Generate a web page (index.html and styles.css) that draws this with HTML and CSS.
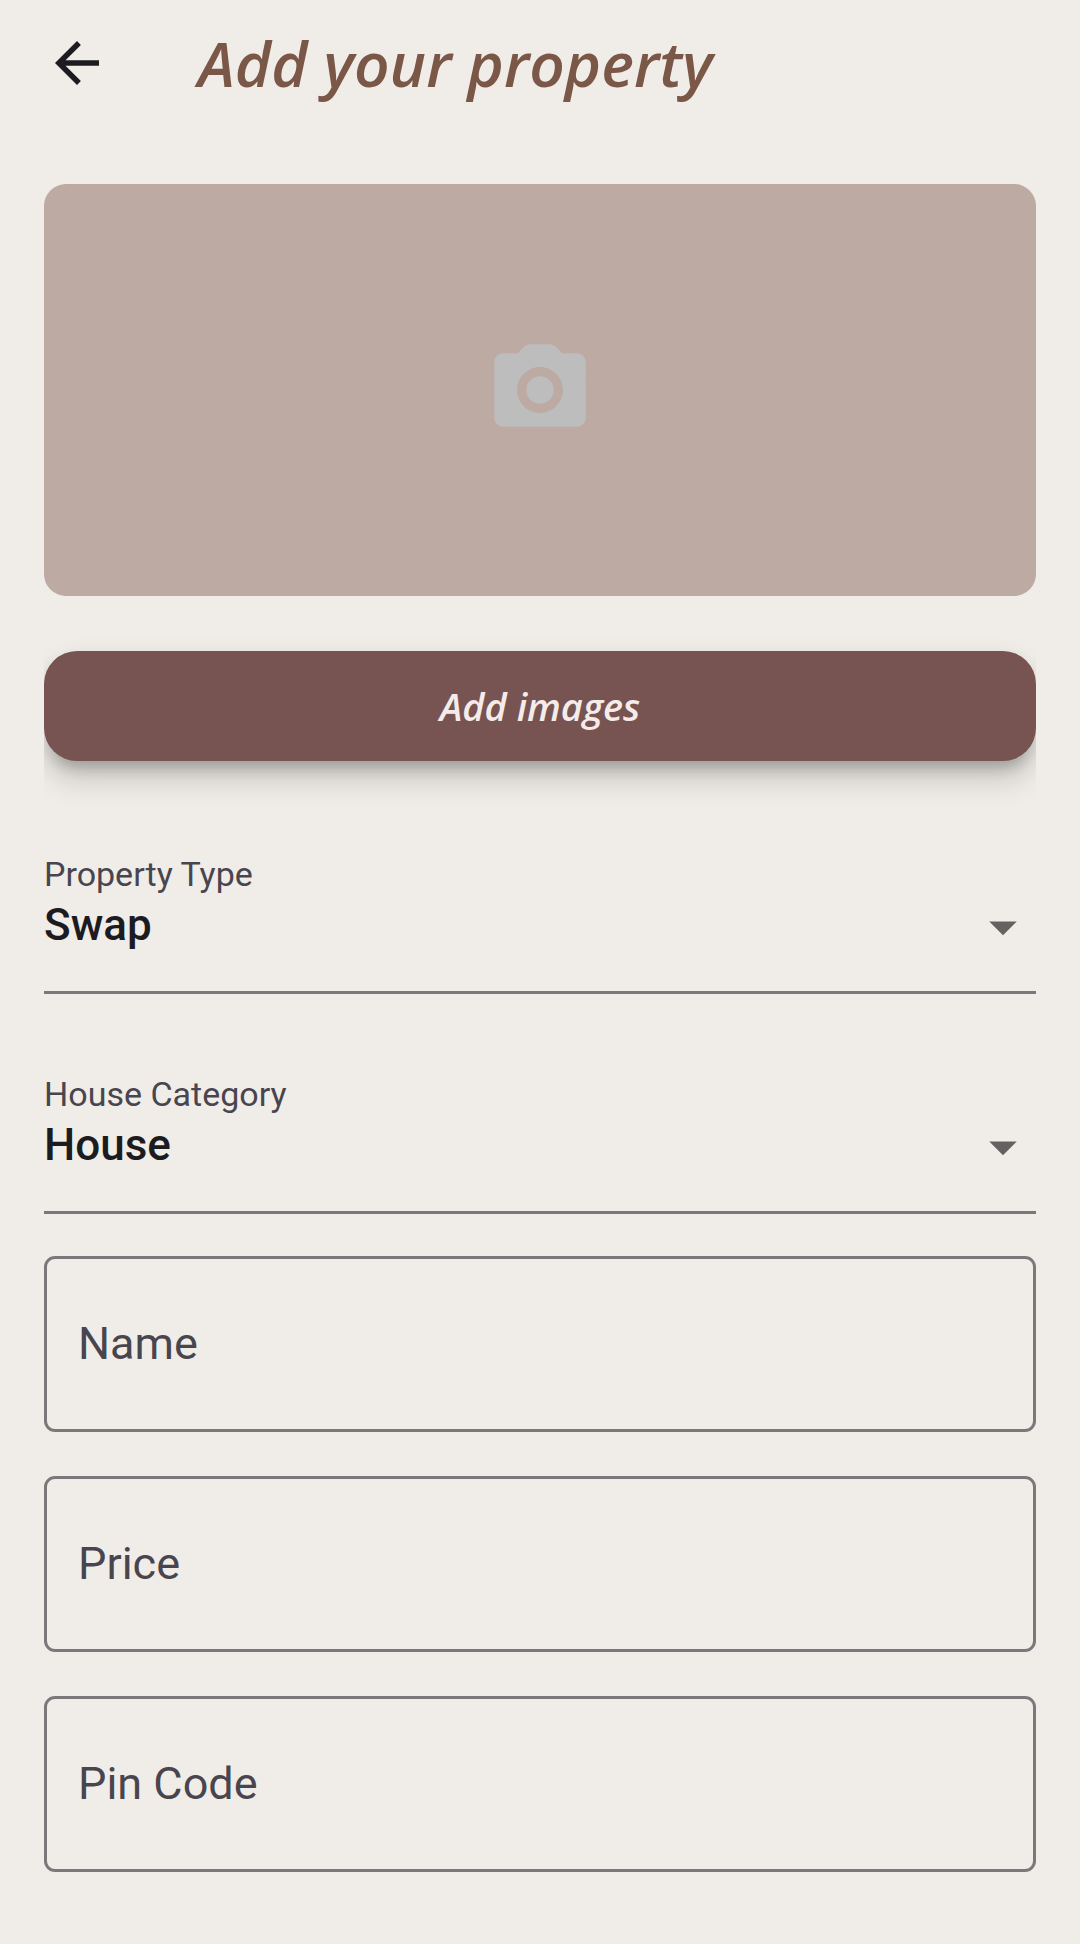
FILE: index.html
```html
<!DOCTYPE html>
<html lang="en">
<head>
  <meta charset="utf-8">
  <meta name="viewport" content="width=device-width, initial-scale=1">
  <title>Add your property</title>
  <link rel="stylesheet" href="styles.css">
</head>
<body>
  <header class="app-bar">
    <button class="back-button" type="button" aria-label="Back">
      <svg class="icon" viewBox="0 0 24 24" aria-hidden="true"><path d="M20 11H7.83l5.59-5.59L12 4l-8 8 8 8 1.41-1.41L7.83 13H20v-2z"/></svg>
    </button>
    <h1 class="title">Add your property</h1>
  </header>
  <main>
    <form class="form">
      <div class="photo">
        <svg class="photo-icon" viewBox="0 0 24 24" aria-hidden="true">
          <circle cx="12" cy="12" r="3"/>
          <path d="M20 4h-3.17l-1.24-1.35C15.22 2.24 14.68 2 14.12 2H9.88c-.56 0-1.1.24-1.48.65L7.17 4H4c-1.1 0-2 .9-2 2v12c0 1.1.9 2 2 2h16c1.1 0 2-.9 2-2V6c0-1.1-.9-2-2-2zm-8 13c-2.76 0-5-2.24-5-5s2.24-5 5-5 5 2.24 5 5-2.24 5-5 5z"/>
        </svg>
      </div>
      <div class="upload">
        <button class="upload-button" type="button">Add images</button>
      </div>
      <div class="choice">
        <label class="choice-label" for="type">Property Type</label>
        <select class="choice-select" id="type">
          <option>Swap</option>
          <option>Rent</option>
        </select>
        <svg class="icon choice-arrow" viewBox="0 0 24 24" aria-hidden="true"><path d="M7 10l5 5 5-5z"/></svg>
      </div>
      <div class="choice">
        <label class="choice-label" for="category">House Category</label>
        <select class="choice-select" id="category">
          <option>House</option>
          <option>Apartment</option>
        </select>
        <svg class="icon choice-arrow" viewBox="0 0 24 24" aria-hidden="true"><path d="M7 10l5 5 5-5z"/></svg>
      </div>
      <div class="fields">
        <div class="field">
          <input class="field-input" id="name" type="text" placeholder=" ">
          <label class="field-label" for="name">Name</label>
        </div>
        <div class="field">
          <input class="field-input" id="price" type="text" inputmode="decimal" placeholder=" ">
          <label class="field-label" for="price">Price</label>
        </div>
        <div class="field">
          <input class="field-input" id="pin" type="text" inputmode="numeric" placeholder=" ">
          <label class="field-label" for="pin">Pin Code</label>
        </div>
      </div>
    </form>
  </main>
</body>
</html>
```
FILE: styles.css
```css
* {
  box-sizing: border-box;
}

body {
  margin: 0;
  background: #f0ede8;
  color: #1c1b1f;
  font-family: Roboto, sans-serif;
}

.app-bar {
  display: flex;
  align-items: center;
  gap: 88px;
  padding: 23px 44px 25px;
}

.back-button {
  flex: none;
  display: block;
  padding: 0;
  border: 0;
  background: none;
  color: inherit;
}

.icon {
  display: block;
  width: 66px;
  height: 66px;
  fill: currentColor;
}

.title {
  margin: 0;
  color: #7a5747;
  font: italic 600 62px/80px "Open Sans", sans-serif;
}

.form {
  padding: 56px 44px;
}

.photo {
  display: grid;
  place-items: center;
  padding: 151px 0;
  border-radius: 22px;
  background: #bcaaa3;
}

.photo-icon {
  width: 110px;
  height: 110px;
  fill: #bdbdbd;
}

/* Cuts the button's shadow off at the column edges. */
.upload {
  padding: 55px 0;
  overflow: hidden;
}

.upload-button {
  display: block;
  width: 100%;
  padding: 31px;
  border: 0;
  border-radius: 33px;
  background: #775452;
  color: #f5ece9;
  font: italic 600 38px/48px "Open Sans", sans-serif;
  box-shadow: 0 14px 14px -8px rgba(0, 0, 0, 0.2), 0 22px 28px 2px rgba(0, 0, 0, 0.1), 0 8px 24px 0 rgba(0, 0, 0, 0.1);
}

.choice {
  display: grid;
  padding: 38px 0 42px;
}

.choice-label {
  color: #49454f;
  font-size: 34px;
  line-height: 40px;
}

.choice-select,
.choice-arrow {
  grid-row: 2;
  grid-column: 1;
}

.choice-select {
  appearance: none;
  width: 100%;
  padding: 5px 66px 40px 0;
  border: 0;
  border-bottom: 3px solid #7b777b;
  border-radius: 0;
  background: none;
  color: #1c1b1f;
  font: 500 44px/52px Roboto, sans-serif;
}

.choice-arrow {
  justify-self: end;
  color: #646261;
  pointer-events: none;
}

.fields {
  display: grid;
  gap: 44px;
}

.field {
  display: grid;
  align-items: center;
}

.field-input,
.field-label {
  grid-area: 1 / 1;
  font: 400 45px/52px Roboto, sans-serif;
}

.field-input {
  width: 100%;
  padding: 59px 32px;
  border: 3px solid #7b777b;
  border-radius: 11px;
  background: none;
  color: inherit;
}

.field-label {
  padding: 0 34px;
  color: #49454f;
  pointer-events: none;
}

.field-input:not(:placeholder-shown) + .field-label {
  visibility: hidden;
}
```
